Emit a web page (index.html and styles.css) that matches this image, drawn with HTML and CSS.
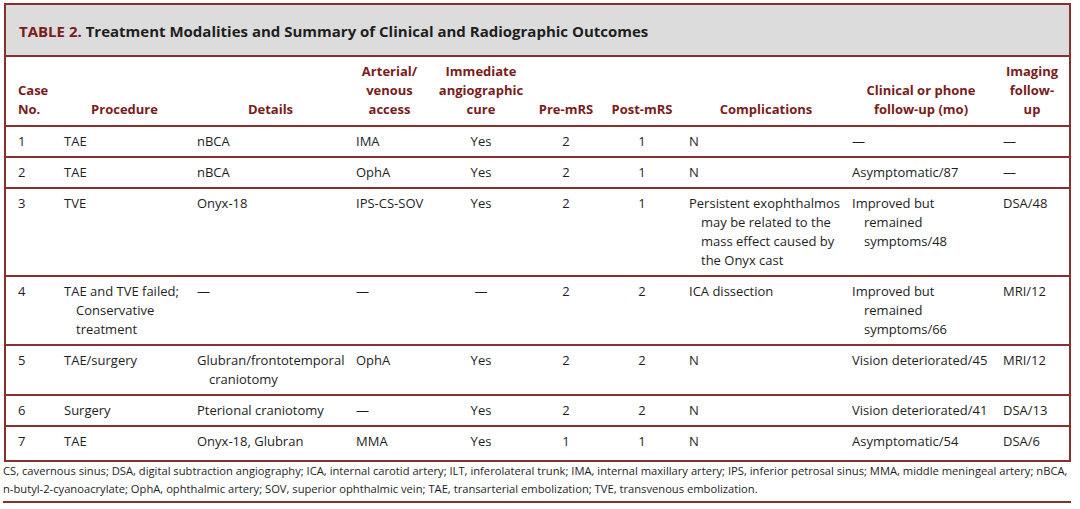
FILE: index.html
```html
<!DOCTYPE html>
<html>
<head>
<meta charset="utf-8">
<link rel="stylesheet" href="styles.css">
</head>
<body>
<div class="page">
  <div class="box">
    <div class="title"><span class="tnum">TABLE 2.</span> Treatment Modalities and Summary of Clinical and Radiographic Outcomes</div>
    <table class="tbl">
      <colgroup>
        <col class="c-case"><col class="c-proc"><col class="c-det"><col class="c-acc"><col class="c-cure"><col class="c-pre"><col class="c-post"><col class="c-comp"><col class="c-clin"><col class="c-img">
      </colgroup>
      <thead>
        <tr>
          <th class="l">Case<br>No.</th>
          <th>Procedure</th>
          <th>Details</th>
          <th>Arterial/<br>venous<br>access</th>
          <th>Immediate<br>angiographic<br>cure</th>
          <th>Pre-mRS</th>
          <th>Post-mRS</th>
          <th>Complications</th>
          <th>Clinical or phone<br>follow-up (mo)</th>
          <th>Imaging<br>follow-<br>up</th>
        </tr>
      </thead>
      <tbody>
        <tr>
          <td>1</td><td><div class="h">TAE</div></td><td><div class="h">nBCA</div></td><td>IMA</td><td class="c">Yes</td><td class="c">2</td><td class="c">1</td><td class="cp">N</td><td class="cl">—</td><td class="im">—</td>
        </tr>
        <tr>
          <td>2</td><td><div class="h">TAE</div></td><td><div class="h">nBCA</div></td><td>OphA</td><td class="c">Yes</td><td class="c">2</td><td class="c">1</td><td class="cp">N</td><td class="cl">Asymptomatic/87</td><td class="im">—</td>
        </tr>
        <tr>
          <td>3</td><td><div class="h">TVE</div></td><td><div class="h">Onyx-18</div></td><td>IPS-CS-SOV</td><td class="c">Yes</td><td class="c">2</td><td class="c">1</td><td class="cp"><div class="h">Persistent exophthalmos may be related to the mass effect caused by the Onyx cast</div></td><td class="cl"><div class="h">Improved but remained symptoms/48</div></td><td class="im">DSA/48</td>
        </tr>
        <tr>
          <td>4</td><td><div class="h">TAE and TVE failed; Conservative treatment</div></td><td><div class="h">—</div></td><td>—</td><td class="c">—</td><td class="c">2</td><td class="c">2</td><td class="cp">ICA dissection</td><td class="cl"><div class="h">Improved but remained symptoms/66</div></td><td class="im">MRI/12</td>
        </tr>
        <tr>
          <td>5</td><td><div class="h">TAE/surgery</div></td><td><div class="h">Glubran/frontotemporal craniotomy</div></td><td>OphA</td><td class="c">Yes</td><td class="c">2</td><td class="c">2</td><td class="cp">N</td><td class="cl">Vision deteriorated/45</td><td class="im">MRI/12</td>
        </tr>
        <tr>
          <td>6</td><td><div class="h">Surgery</div></td><td><div class="h">Pterional craniotomy</div></td><td>—</td><td class="c">Yes</td><td class="c">2</td><td class="c">2</td><td class="cp">N</td><td class="cl">Vision deteriorated/41</td><td class="im">DSA/13</td>
        </tr>
        <tr class="last">
          <td>7</td><td><div class="h">TAE</div></td><td><div class="h">Onyx-18, Glubran</div></td><td>MMA</td><td class="c">Yes</td><td class="c">1</td><td class="c">1</td><td class="cp">N</td><td class="cl">Asymptomatic/54</td><td class="im">DSA/6</td>
        </tr>
      </tbody>
    </table>
  </div>
  <p class="note">CS, cavernous sinus; DSA, digital subtraction angiography; ICA, internal carotid artery; ILT, inferolateral trunk; IMA, internal maxillary artery; IPS, inferior petrosal sinus; MMA, middle meningeal artery; nBCA, <span class="nw">n-butyl-2-cyanoacrylate;</span> OphA, ophthalmic artery; SOV, superior ophthalmic vein; TAE, transarterial embolization; TVE, transvenous embolization.</p>
</div>
</body>
</html>
```
FILE: styles.css
```css
html, body {
  margin: 0;
  padding: 0;
  background: #ffffff;
}
body {
  font-family: "Open Sans", "Noto Sans", sans-serif;
  color: #1e1e1e;
}
.page {
  padding: 3px 9px 0 4px;
  width: 1067px;
}
.box {
  border: 2px solid #8a2f2f;
}
.title {
  background: #dcdcdc;
  height: 52px;
  box-sizing: border-box;
  padding: 16px 0 0 13px;
  font-size: 15px;
  font-weight: bold;
  line-height: 20px;
  color: #1e1e1e;
  border-bottom: 2px solid #8a2f2f;
}
.tnum {
  color: #7a1c1c;
}
.tbl {
  width: 100%;
  border-collapse: collapse;
  table-layout: fixed;
  font-size: 13px;
  line-height: 19px;
}
.c-case { width: 52px; }
.c-proc { width: 133px; }
.c-det { width: 159px; }
.c-acc { width: 79px; }
.c-cure { width: 104px; }
.c-pre { width: 66px; }
.c-post { width: 86px; }
.c-comp { width: 162px; }
.c-clin { width: 148px; }
.c-img { width: 74px; }
.tbl th {
  color: #7a1c1c;
  font-weight: bold;
  text-align: center;
  vertical-align: bottom;
  padding: 5px 0 6px;
  height: 56px;
  border-bottom: 2px solid #8a2f2f;
}
.tbl th.l {
  text-align: left;
  padding-left: 12px;
}
.tbl td {
  vertical-align: top;
  padding: 5px 0 5px 6px;
  border-bottom: 2px solid #8a2f2f;
  text-align: left;
}
.tbl td:first-child {
  padding-left: 12px;
}
.tbl td.c {
  text-align: center;
  padding-left: 0;
}
.tbl td.cp {
  padding-left: 4px;
}
.tbl td.cl {
  padding-left: 5px;
}
.tbl td.im {
  padding-left: 8px;
}
.tbl tr.last td {
  border-bottom: none;
  padding-bottom: 9px;
}
.h {
  padding-left: 12px;
  text-indent: -12px;
}
.note {
  margin: 0 0 0 -1px;
  width: 1068px;
  padding: 0 0 3px;
  font-size: 11.2px;
  line-height: 18px;
  color: #1e1e1e;
  border-bottom: 2px solid #8a2f2f;
}
.nw {
  white-space: nowrap;
}
```
